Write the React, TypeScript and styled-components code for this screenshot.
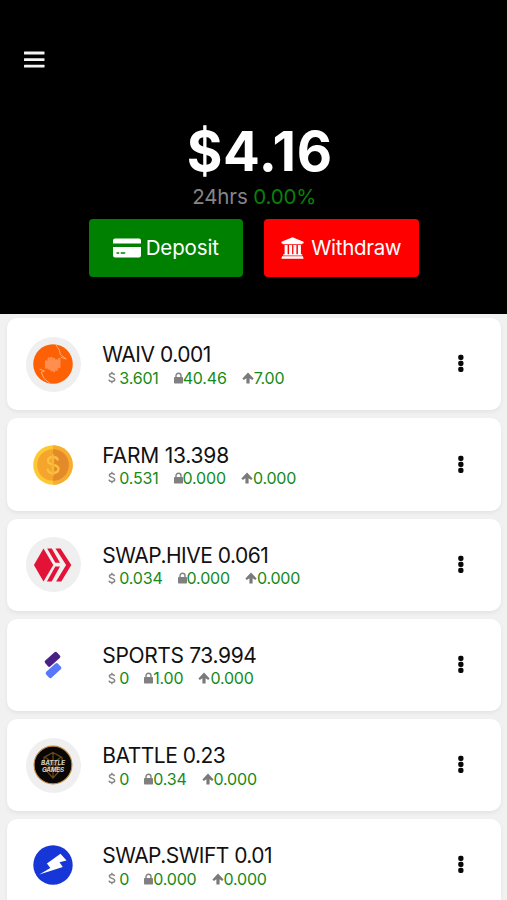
import React from 'react';
import styled, { createGlobalStyle } from 'styled-components';

const GlobalStyle = createGlobalStyle`
  * { box-sizing: border-box; }
  body {
    margin: 0;
    background: #f1f1f1;
    font-family: Inter, "Liberation Sans", sans-serif;
    overflow: hidden;
  }
  svg { display: block; flex: none; }
`;

const Screen = styled.main`
  display: flex;
  flex-direction: column;
  width: 507px;
  height: 900px;
  overflow: hidden;
`;

const Header = styled.header`
  flex: none;
  height: 314px;
  background: #000;
  padding-top: 50px;
  display: flex;
  flex-direction: column;
  align-items: center;
`;

const MenuButton = styled.button`
  align-self: flex-start;
  margin: 0 0 0 24px;
  padding: 0;
  border: 0;
  background: none;
  height: 20px;
`;

const Total = styled.h1`
  margin: 51px 0 0 12.5px;
  font-size: 54.5px;
  line-height: 60px;
  font-weight: 700;
  letter-spacing: 0.6px;
  color: #fff;
`;

const Change = styled.p`
  margin: 2.5px 0 0 1.5px;
  font-size: 20.5px;
  line-height: 26px;
  letter-spacing: -0.15px;
  color: #858585;
  span { color: #0a800a; }
`;

const Actions = styled.div`
  display: flex;
  gap: 21px;
  margin-top: 9.9px;
`;

const ActionButton = styled.button<{ $color: string; $gap: number; $spacing: number }>`
  display: flex;
  align-items: center;
  justify-content: center;
  gap: ${(p) => p.$gap}px;
  width: 154.5px;
  height: 58px;
  padding: 0;
  border: 0;
  border-radius: 4px;
  background: ${(p) => p.$color};
  color: #fff;
  font: 400 20.5px/26px Inter, "Liberation Sans", sans-serif;
  letter-spacing: ${(p) => p.$spacing}px;
`;

const TokenList = styled.ul`
  list-style: none;
  margin: 0;
  padding: 4.3px 6.5px 0 7.3px;
  display: flex;
  flex-direction: column;
  gap: 8px;
`;

const Card = styled.li`
  flex: none;
  height: 92.2px;
  display: flex;
  align-items: center;
  padding: 0 36.5px 0 18.5px;
  border-radius: 10px;
  background: #fff;
  box-shadow: 0 2px 4px rgba(0, 0, 0, 0.06);
`;

const Avatar = styled.div<{ $ring: boolean }>`
  flex: none;
  width: 55px;
  height: 55px;
  display: flex;
  align-items: center;
  justify-content: center;
  border-radius: 50%;
  background: ${(p) => (p.$ring ? '#efefef' : 'transparent')};
`;

const Info = styled.div`
  flex: 1;
  margin-left: 21.5px;
`;

const Name = styled.div<{ $spacing: number }>`
  font-size: 21px;
  line-height: 28px;
  letter-spacing: ${(p) => p.$spacing}px;
  color: #111;
  white-space: nowrap;
`;

const Stats = styled.div`
  display: flex;
  align-items: center;
  gap: 15px;
  margin: -0.6px 0 0.6px 5.5px;
  height: 18px;
`;

const Stat = styled.span<{ $gap?: number }>`
  display: flex;
  align-items: center;
  gap: ${(p) => p.$gap ?? 0}px;
  font-size: 16px;
  line-height: 18px;
  letter-spacing: -0.18px;
  color: #158a18;
  white-space: nowrap;
`;

const MenuIcon = () => (
  <svg width="21" height="20" viewBox="0 0 21 20" fill="#f4f4f4">
    <rect y="1.6" width="20.5" height="2.8" rx=".5" />
    <rect y="8.2" width="20.5" height="2.8" rx=".5" />
    <rect y="14.8" width="20.5" height="2.8" rx=".5" />
  </svg>
);

const CardIcon = () => (
  <svg width="28" height="20" viewBox="0 0 28 20" fill="#fff">
    <path d="M2 .5h24a2 2 0 0 1 2 2v3H0v-3a2 2 0 0 1 2-2z" />
    <path fillRule="evenodd" d="M0 9h28v8.500a2 2 0 0 1-2 2H2a2 2 0 0 1-2-2zM3.500 14.200v1.500h2.700v-1.500zM7.700 14.200v1.500h4.500v-1.500z" />
  </svg>
);

const BankIcon = () => (
  <svg width="23" height="22" viewBox="0 0 23 22" fill="#fff">
    <path d="M11.500.3 22.500 4.800v1.600h-1.300v.8H1.800v-.8H.5V4.800zM3.600 8h3v9.300h1.500V8h3v9.300h1.300V8h3v9.300h1.500V8h3v9.300h1.300v1.200H2.200v-1.200h1.400zM1.100 19.300h20.800l.7 2.500H.4z" />
  </svg>
);

const DollarIcon = () => (
  <svg width="8" height="13" viewBox="0 0 8 13" fill="none" stroke="#858585" strokeWidth="1.45">
    <path d="M6.500 4.100C6.300 2.900 5.300 2.500 3.900 2.500c-1.500 0-2.500.7-2.500 1.800 0 2.700 5.300 1.400 5.300 4.200 0 1.200-1.200 2-2.800 2S1.200 9.900 1 8.600M3.900.8v1.800M3.900 10.400v1.900" />
  </svg>
);

const LockIcon = () => (
  <svg width="9" height="12" viewBox="0 0 9 12">
    <rect y="5" width="9" height="6.500" rx=".7" fill="#808080" />
    <path d="M2 5.500V3.700a2.500 2.500 0 0 1 5 0v1.800" fill="none" stroke="#808080" strokeWidth="1.400" />
  </svg>
);

const ArrowIcon = () => (
  <svg width="12" height="12" viewBox="0 0 12 12">
    <path d="M6 .6 11.600 6.400 10.200 8 7.600 6.300V11.600H4.400V6.300L1.800 8 .4 6.400z" fill="#7a7a7a" />
  </svg>
);

const DotsIcon = () => (
  <svg width="6" height="22" viewBox="0 0 6 22" fill="#080808">
    <rect x=".2" y="1.800" width="5.300" height="5.200" rx="2" />
    <rect x=".2" y="7.800" width="5.300" height="5.200" rx="2" />
    <rect x=".2" y="13.800" width="5.300" height="5.200" rx="2" />
  </svg>
);

const WaivLogo = () => (
  <svg width="40" height="40" viewBox="0 0 40 40">
    <circle cx="20" cy="20" r="19.800" fill="#fe6105" />
    <g fill="none" stroke="#ffab7c" strokeWidth="1" strokeLinejoin="round">
      <path d="M23 .8l3.400 5.400 1 4.400 5.800 4.400-5.400-1.800" />
      <path d="M6.500 25l5 2.100-3.200 1 2.500 6.100 6 5.200" />
    </g>
    <g stroke="#ff8f4e" strokeWidth="2.600" strokeLinecap="round">
      <path d="M13.200 17.500v6M15.800 14.500v10M18.400 14v12M21 15v12M23.600 16.500v9M26.200 15v8" />
    </g>
  </svg>
);

const CoinLogo = () => (
  <svg width="40" height="40" viewBox="0 0 40 40">
    <circle cx="20" cy="20" r="19.800" fill="#fdc933" />
    <path d="M20 .2a19.800 19.800 0 0 1 0 39.600z" fill="#f6ad30" />
    <circle cx="20" cy="20" r="15.800" fill="#f5a42e" />
    <path d="M20 4.200a15.800 15.800 0 0 1 0 31.600z" fill="#e38a2b" />
    <path d="M25 15.500c-.5-2.500-2.500-3.500-5-3.500-3 0-5 1.500-5 3.800 0 5.600 10.500 2.700 10.500 8 0 2.700-2.300 4.200-5.500 4.200s-5.200-1.500-5.700-4.300M20 9.500v21" fill="none" stroke="#fbc13c" strokeWidth="2.300" />
    <path d="M20 9.500v21" stroke="#f4aa30" strokeWidth="1" />
  </svg>
);

const HiveLogo = () => (
  <svg width="40" height="40" viewBox="0 0 40 40" fill="#e31337">
    <path d="M10.500 3.500 20.300 20 10.500 36.400.9 20z" />
    <path d="M14.200 3.500h4.600L27 17.800h-4.600zM22.500 3.500h5L38.300 20l-10 16.500h-5.200L33.100 20zM22.300 21.500H27l-8.300 15h-4.800z" />
  </svg>
);

const SportsLogo = () => (
  <svg width="40" height="40" viewBox="0 0 40 40">
    <rect x="-8" y="-3.900" width="16" height="7.800" rx="1.800" fill="#4b2086" transform="translate(19.500 14.300) rotate(-42)" />
    <rect x="-8" y="-3.900" width="16" height="7.800" rx="1.800" fill="#5877fb" transform="translate(20.500 25.600) rotate(-42)" />
  </svg>
);

const BattleLogo = () => (
  <svg width="40" height="40" viewBox="0 0 40 40">
    <circle cx="20" cy="20" r="18.900" fill="#080705" stroke="#c18a43" strokeWidth="1.100" />
    <path d="M20 7.500l9 5v6l-9 5-9-5v-6zM12 24l8 9 8-9M20 8v25M12 12l16 13M28 12L12 25" fill="none" stroke="#694719" strokeWidth="1.300" />
    <g fill="#d7d1c5" fontFamily="Inter, sans-serif" fontSize="6.300" fontStyle="italic" fontWeight="700" textAnchor="middle">
      <text x="20" y="20.300" textLength="24">BATTLE</text>
      <text x="20" y="26.700" textLength="22">GAMES</text>
    </g>
  </svg>
);

const SwiftLogo = () => (
  <svg width="40" height="40" viewBox="0 0 40 40">
    <circle cx="20" cy="20" r="19.700" fill="#1736d8" />
    <path d="M27.500 8.700 33.500 15.500l-7 1.700 3.300 4.800L6.300 29.500l11-6.500-3.400-4.500z" fill="#fff" />
  </svg>
);

type Token = {
  name: string;
  spacing: number;
  logo: React.ReactNode;
  ring: boolean;
  usd: string;
  locked: string;
  up: string;
};

const tokens: Token[] = [
  { name: 'WAIV 0.001', spacing: -0.47, logo: <WaivLogo />, ring: true, usd: '3.601', locked: '40.46', up: '7.00' },
  { name: 'FARM 13.398', spacing: -0.2, logo: <CoinLogo />, ring: false, usd: '0.531', locked: '0.000', up: '0.000' },
  { name: 'SWAP.HIVE 0.061', spacing: -0.5, logo: <HiveLogo />, ring: true, usd: '0.034', locked: '0.000', up: '0.000' },
  { name: 'SPORTS 73.994', spacing: -0.36, logo: <SportsLogo />, ring: false, usd: '0', locked: '1.00', up: '0.000' },
  { name: 'BATTLE 0.23', spacing: -0.5, logo: <BattleLogo />, ring: true, usd: '0', locked: '0.34', up: '0.000' },
  { name: 'SWAP.SWIFT 0.01', spacing: -0.55, logo: <SwiftLogo />, ring: false, usd: '0', locked: '0.000', up: '0.000' },
];

export default function App() {
  return (
    <Screen>
      <GlobalStyle />
      <Header>
        <MenuButton aria-label="Menu"><MenuIcon /></MenuButton>
        <Total>$4.16</Total>
        <Change>24hrs <span>0.00%</span></Change>
        <Actions>
          <ActionButton $color="#008000" $gap={5} $spacing={-0.15}><CardIcon />Deposit</ActionButton>
          <ActionButton $color="#ff0000" $gap={7} $spacing={-0.3}><BankIcon />Withdraw</ActionButton>
        </Actions>
      </Header>
      <TokenList>
        {tokens.map((t) => (
          <Card key={t.name}>
            <Avatar $ring={t.ring}>{t.logo}</Avatar>
            <Info>
              <Name $spacing={t.spacing}>{t.name}</Name>
              <Stats>
                <Stat $gap={3.5}><DollarIcon />{t.usd}</Stat>
                <Stat><LockIcon />{t.locked}</Stat>
                <Stat><ArrowIcon />{t.up}</Stat>
              </Stats>
            </Info>
            <DotsIcon />
          </Card>
        ))}
      </TokenList>
    </Screen>
  );
}
